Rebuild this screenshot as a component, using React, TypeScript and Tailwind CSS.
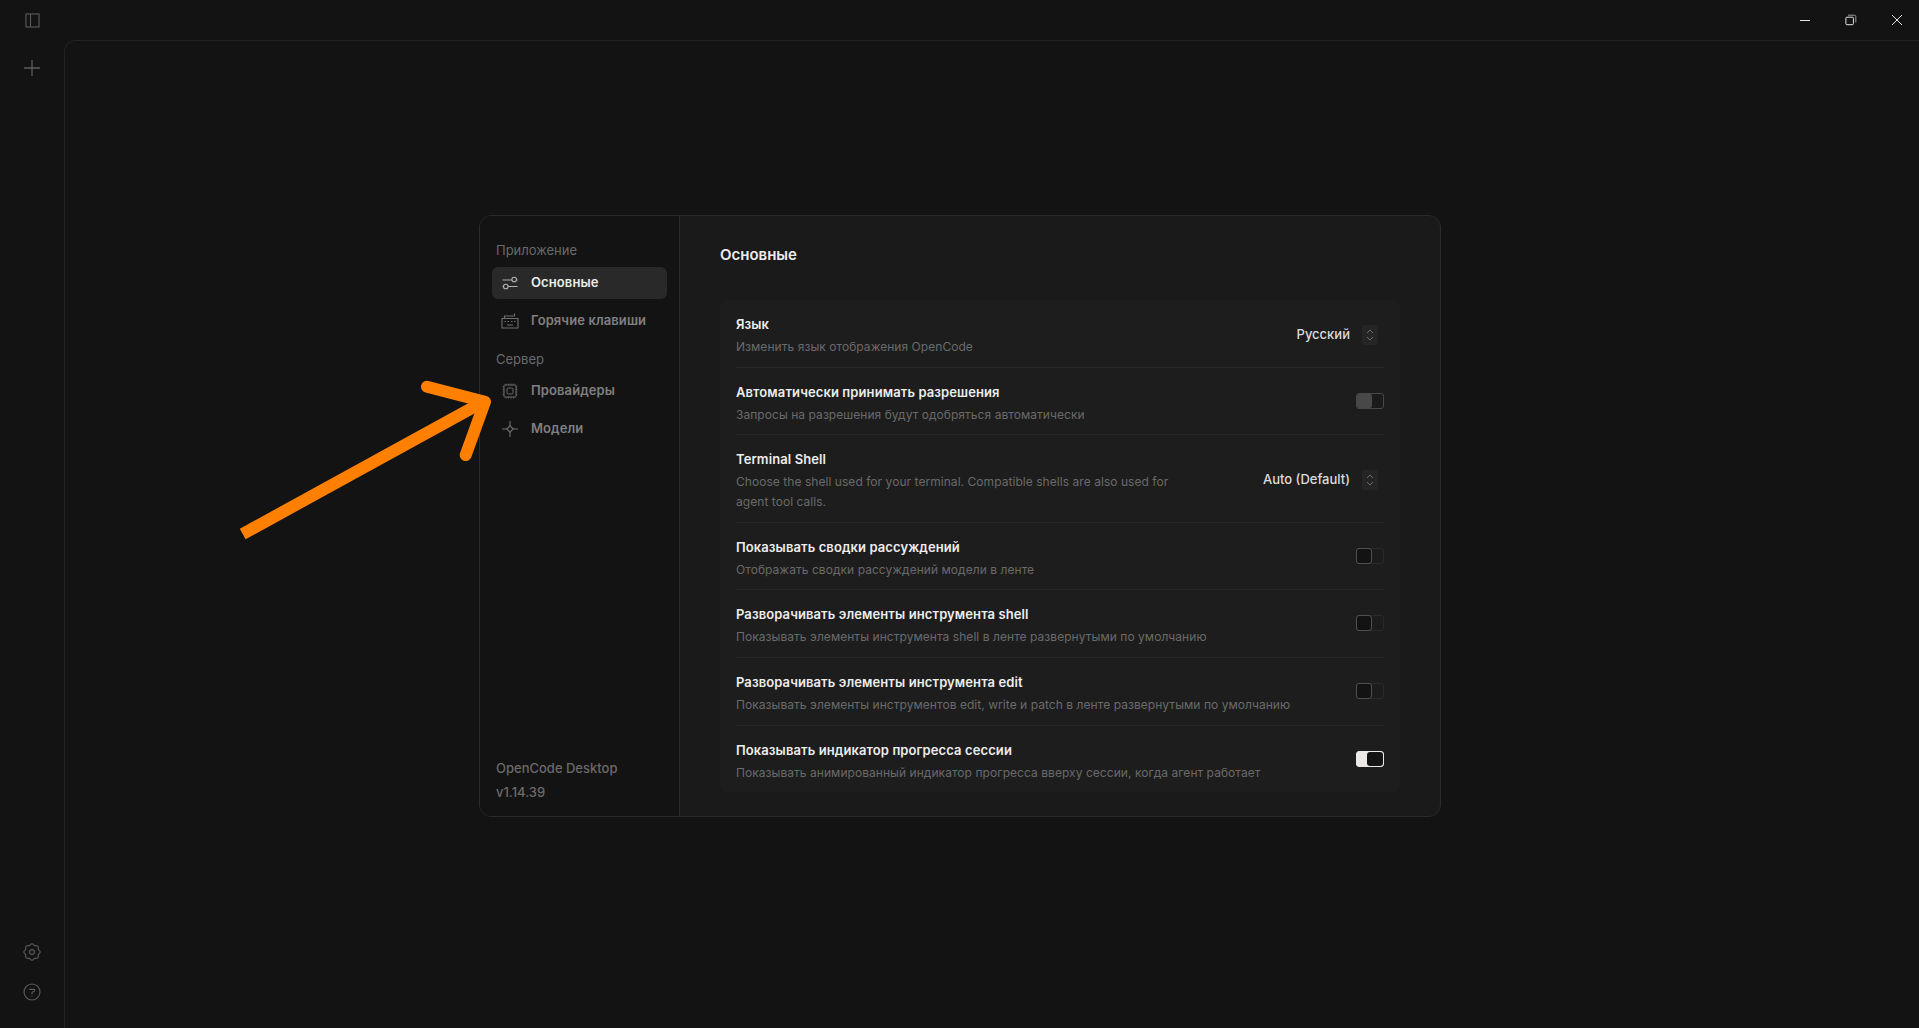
const settingRows = [
  { title: "Язык", desc: "Изменить язык отображения OpenCode", select: "Русский" },
  { title: "Автоматически принимать разрешения", desc: "Запросы на разрешения будут одобряться автоматически", toggle: "muted" },
  {
    title: "Terminal Shell",
    desc: "Choose the shell used for your terminal. Compatible shells are also used for agent tool calls.",
    select: "Auto (Default)",
    narrow: true,
  },
  { title: "Показывать сводки рассуждений", desc: "Отображать сводки рассуждений модели в ленте", toggle: "off" },
  { title: "Разворачивать элементы инструмента shell", desc: "Показывать элементы инструмента shell в ленте развернутыми по умолчанию", toggle: "off" },
  { title: "Разворачивать элементы инструмента edit", desc: "Показывать элементы инструментов edit, write и patch в ленте развернутыми по умолчанию", toggle: "off" },
  { title: "Показывать индикатор прогресса сессии", desc: "Показывать анимированный индикатор прогресса вверху сессии, когда агент работает", toggle: "on" },
];

// scalloped outline of the gear, eight lobes round the centre of a 18 box
const gearPath = (() => {
  const at = (deg: number, r: number) => {
    const a = (deg * Math.PI) / 180;
    return `${(9 + r * Math.cos(a)).toFixed(2)} ${(9 + r * Math.sin(a)).toFixed(2)}`;
  };
  let d = `M${at(-22.5, 6.7)}`;
  for (let k = 0; k < 8; k++) {
    d += `Q${at(k * 45, 10.2)} ${at(k * 45 + 22.5, 6.7)}`;
  }
  return d + "Z";
})();

function SlidersIcon() {
  return (
    <svg className="size-4.5 shrink-0" fill="none" stroke="currentColor" strokeWidth="1.1" viewBox="0 0 18 18">
      <path d="M1.5 6H11M15.5 6H16.5M1.5 12.5H2.5M7 12.5H16.5" />
      <circle cx="13.2" cy="5.5" r="2.3" />
      <circle cx="4.8" cy="12.5" r="2.3" />
    </svg>
  );
}

function KeyboardIcon() {
  return (
    <svg className="size-4.5 shrink-0" fill="none" stroke="currentColor" strokeWidth="1.1" viewBox="0 0 18 18">
      <path d="M1 6.5H17V16H1Z" />
      <path d="M3.5 6.5V4H13.5V1.5" />
      <path d="M3.5 9.5H5M6.5 9.5H8M10 9.5H11.5M13 9.5H14.5M6 13H12" />
    </svg>
  );
}

function ChipIcon() {
  return (
    <svg className="size-4.5 shrink-0" fill="none" stroke="currentColor" strokeWidth="1" viewBox="0 0 18 18">
      <rect height="12" rx="0.5" width="12" x="3" y="3" />
      <rect height="6" rx="1.5" width="6" x="6" y="6" />
      <path d="M1.5 5H3M1.5 7.5H3M1.5 10H3M1.5 12.5H3M15 5H16.5M15 7.5H16.5M15 10H16.5M15 12.5H16.5M5 1.5V3M7.5 1.5V3M10 1.5V3M12.5 1.5V3M5 15V16.5M7.5 15V16.5M10 15V16.5M12.5 15V16.5" strokeWidth="0.7" />
    </svg>
  );
}

function SparkIcon() {
  return (
    <svg className="size-4.5 shrink-0" fill="none" stroke="currentColor" strokeWidth="1.1" viewBox="0 0 18 18">
      <path d="M9 1V4.5C9 6.5 6.5 9 4.5 9H1M9 17V13.5C9 11.5 6.5 9 4.5 9M17 9H13.5C11.5 9 9 6.5 9 4.5M13.5 9C11.5 9 9 11.5 9 13.5" />
    </svg>
  );
}

function NavItem({ label, icon, active }: { label: string; icon: React.ReactNode; active?: boolean }) {
  return (
    <div className={"flex h-8 items-center gap-3 rounded-md px-[9px] text-[13px] font-semibold tracking-[0.1px] " + (active ? "bg-[#292929] text-[#ededed]" : "text-[#808080]")}>
      <span className={active ? "text-[#b0b0b0]" : "text-[#6e6e6e]"}>{icon}</span>
      <span>{label}</span>
    </div>
  );
}

function Toggle({ state }: { state: string }) {
  if (state === "on") {
    return (
      <div className="-mt-[5px] flex h-4 w-7 justify-end rounded-[3px] border border-[#ece9e6] bg-[#ece9e6]">
        <div className="h-full w-4 rounded-[3px] bg-[#141414]" />
      </div>
    );
  }
  if (state === "muted") {
    return (
      <div className="-mt-[5px] flex h-4 w-7 rounded-[3px] border border-[#484848] bg-[#1a1a1a]">
        <div className="h-full w-[15px] rounded-[2px] bg-[#484848]" />
      </div>
    );
  }
  return (
    <div className="-mt-[5px] flex h-4 w-7 rounded-[3px] border border-[#2a2a2a] bg-[#1c1c1c]">
      <div className="-m-px h-4 w-4 rounded-[3px] border border-[#505050] bg-[#131313]" />
    </div>
  );
}

function SelectValue({ value }: { value: string }) {
  return (
    <div className="-mt-0.5 flex items-center gap-3 pr-1.5 text-[13px] font-medium text-[#dcdcdc]">
      <span>{value}</span>
      <div className="flex h-5 w-4 items-center justify-center rounded-[3px] bg-[#252525]">
        <svg className="h-3.5 w-2.5" fill="none" stroke="#6a6a6a" strokeWidth="1" viewBox="0 0 10 14">
          <path d="M2 5L5 2L8 5M2 9L5 12L8 9" />
        </svg>
      </div>
    </div>
  );
}

function SettingRow({ row, last }: { row: (typeof settingRows)[number]; last: boolean }) {
  return (
    <div className={"flex items-center justify-between pt-[14px] pb-[9.6px] " + (last ? "" : "border-b border-[#262626]")}>
      <div className={row.narrow ? "w-[440px]" : ""}>
        <div className="text-[13px] leading-5 font-semibold tracking-[0.1px] text-[#ededed]">{row.title}</div>
        <div className="mt-[3px] text-[12px] leading-[20px] tracking-[0.05px] text-[#6a6a6a]">{row.desc}</div>
      </div>
      {row.select ? <SelectValue value={row.select} /> : <Toggle state={row.toggle as string} />}
    </div>
  );
}

export default function App() {
  return (
    <div className="relative flex h-screen w-screen flex-col overflow-hidden bg-[#131313] font-['Inter',sans-serif]">
      <div className="flex h-10 shrink-0 items-center justify-between pl-[25px] text-[#5c5c5c]">
        <svg className="size-[15px]" fill="none" stroke="currentColor" strokeWidth="1.1" viewBox="0 0 15 15">
          <rect height="13" width="13" x="1" y="1" />
          <path d="M5.5 1V14" />
        </svg>
        <div className="-mr-px flex h-full items-center text-[#e6e6e6]">
          <div className="flex w-[46px] justify-center">
            <svg className="size-3" fill="none" stroke="currentColor" viewBox="0 0 12 12">
              <path d="M1 6.5H11" />
            </svg>
          </div>
          <div className="flex w-[46px] justify-center">
            <svg className="size-3" fill="none" stroke="currentColor" viewBox="0 0 12 12">
              <rect height="7.5" rx="1" width="7.5" x="0.9" y="3.2" />
              <path d="M3 1.2H9.5C10.4 1.2 10.8 1.7 10.8 2.5V8.5" stroke="#9a9a9a" />
            </svg>
          </div>
          <div className="flex w-[46px] justify-center">
            <svg className="size-3" fill="none" stroke="currentColor" viewBox="0 0 12 12">
              <path d="M1 1L11 11M11 1L1 11" />
            </svg>
          </div>
        </div>
      </div>

      <div className="flex min-h-0 flex-1">
        <div className="flex w-16 shrink-0 flex-col items-center pt-5 pb-[27px] text-[#5c5c5c]">
          <svg className="size-4" fill="none" stroke="currentColor" strokeWidth="1.3" viewBox="0 0 16 16">
            <path d="M8 0V16M0 8H16" />
          </svg>
          <div className="mt-auto flex flex-col items-center gap-[22px]">
            <svg className="size-4.5" fill="none" stroke="currentColor" strokeWidth="1.1" viewBox="0 0 18 18">
              <path d={gearPath} strokeLinejoin="round" />
              <circle cx="9" cy="9" r="2.4" />
            </svg>
            <svg className="size-4.5" fill="none" stroke="currentColor" strokeWidth="1.1" viewBox="0 0 18 18">
              <circle cx="9" cy="9" r="8" />
              <path d="M6.3 6.4H11.5V8L9 9.5V11.2M9 12.4V13.6" />
            </svg>
          </div>
        </div>
        <div className="flex-1 rounded-tl-xl border-t border-l border-[#232323]" />
      </div>

      <div className="absolute inset-0 flex justify-center pt-[215px]">
        <div className="ml-px flex h-[602px] w-[962px] overflow-hidden rounded-xl border border-[#2a2a2a] bg-[#1a1a1a]">
          <div className="flex w-[200px] shrink-0 flex-col border-r border-[#2a2a2a] bg-[#131313] px-3 pt-6 pb-3">
            <div className="px-[4px] text-[13px] leading-5 text-[#6a6a6a]">Приложение</div>
            <div className="mt-[7px] flex flex-col gap-1.5">
              <NavItem active icon={<SlidersIcon />} label="Основные" />
              <NavItem icon={<KeyboardIcon />} label="Горячие клавиши" />
            </div>
            <div className="mt-[12px] px-[4px] text-[13px] leading-5 text-[#6a6a6a]">Сервер</div>
            <div className="mt-[6px] flex flex-col gap-1.5">
              <NavItem icon={<ChipIcon />} label="Провайдеры" />
              <NavItem icon={<SparkIcon />} label="Модели" />
            </div>
            <div className="mt-auto px-[4px] text-[13px] font-medium text-[#6a6a6a]">
              <div className="leading-6">OpenCode Desktop</div>
              <div className="leading-6">v1.14.39</div>
            </div>
          </div>
          <div className="flex-1 pt-[28px] px-10">
            <div className="text-[15px] leading-[22px] font-semibold text-[#ededed]">Основные</div>
            <div className="mt-[34px] rounded-lg bg-[#1d1d1d] px-4">
              {settingRows.map((row, i) => (
                <SettingRow key={row.title} last={i === settingRows.length - 1} row={row} />
              ))}
            </div>
          </div>
        </div>
      </div>

      <svg className="absolute top-[380px] left-[235px] h-[165px] w-[260px]" fill="none" viewBox="0 0 260 165">
        <path d="M7.7 154L248 22" stroke="#ff8000" strokeWidth="12" />
        <path d="M192 6.7L250 21.7L230.7 75" stroke="#ff8000" strokeLinecap="round" strokeLinejoin="round" strokeWidth="12" />
      </svg>
    </div>
  );
}
